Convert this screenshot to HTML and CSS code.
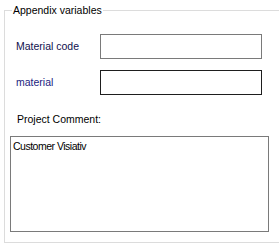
FILE: index.html
```html
<!DOCTYPE html>
<html>
<head>
<meta charset="utf-8">
<link rel="stylesheet" href="styles.css">
</head>
<body>
<div class="group">
  <span class="legend">Appendix variables</span>
  <div class="row first">
    <span class="label navy">Material code</span>
    <div class="input"></div>
  </div>
  <div class="row second">
    <span class="label blue">material</span>
    <div class="input focused"></div>
  </div>
  <div class="comment-label">Project Comment:</div>
  <div class="textarea">Customer Visiativ</div>
</div>
</body>
</html>
```
FILE: styles.css
```css
html, body {
  margin: 0;
  padding: 0;
  background: #ffffff;
}
body {
  font-family: "Liberation Sans", Arial, sans-serif;
  font-size: 10.5px;
  color: #000000;
  width: 279px;
  height: 243px;
  overflow: hidden;
}
.group {
  position: relative;
  margin: 10px 0 0 4px;
  width: 275px;
  box-sizing: border-box;
  border: 1px solid #dcdcdc;
  border-right: none;
  padding: 0 0 10px 5px;
}
.legend {
  position: absolute;
  top: -7px;
  left: 7px;
  padding: 0 1px;
  background: #ffffff;
  line-height: 13px;
}
.row {
  display: flex;
  align-items: center;
  padding-left: 6px;
}
.row.first {
  margin-top: 23px;
}
.row.second {
  margin-top: 11px;
}
.label {
  width: 84px;
  line-height: 13px;
}
.navy {
  color: #10104e;
}
.blue {
  color: #1c1c80;
}
.input {
  width: 162px;
  height: 25px;
  box-sizing: border-box;
  border: 1px solid #7a7a7a;
  background: #ffffff;
}
.input.focused {
  border-color: #1e1e1e;
}
.comment-label {
  margin-top: 18px;
  padding-left: 7px;
  line-height: 13px;
}
.textarea {
  margin-top: 10px;
  width: 259px;
  height: 96px;
  box-sizing: border-box;
  border: 1px solid #7a7a7a;
  padding: 3px 2px;
  font-size: 10.5px;
  line-height: 12px;
  letter-spacing: -0.5px;
}
```
